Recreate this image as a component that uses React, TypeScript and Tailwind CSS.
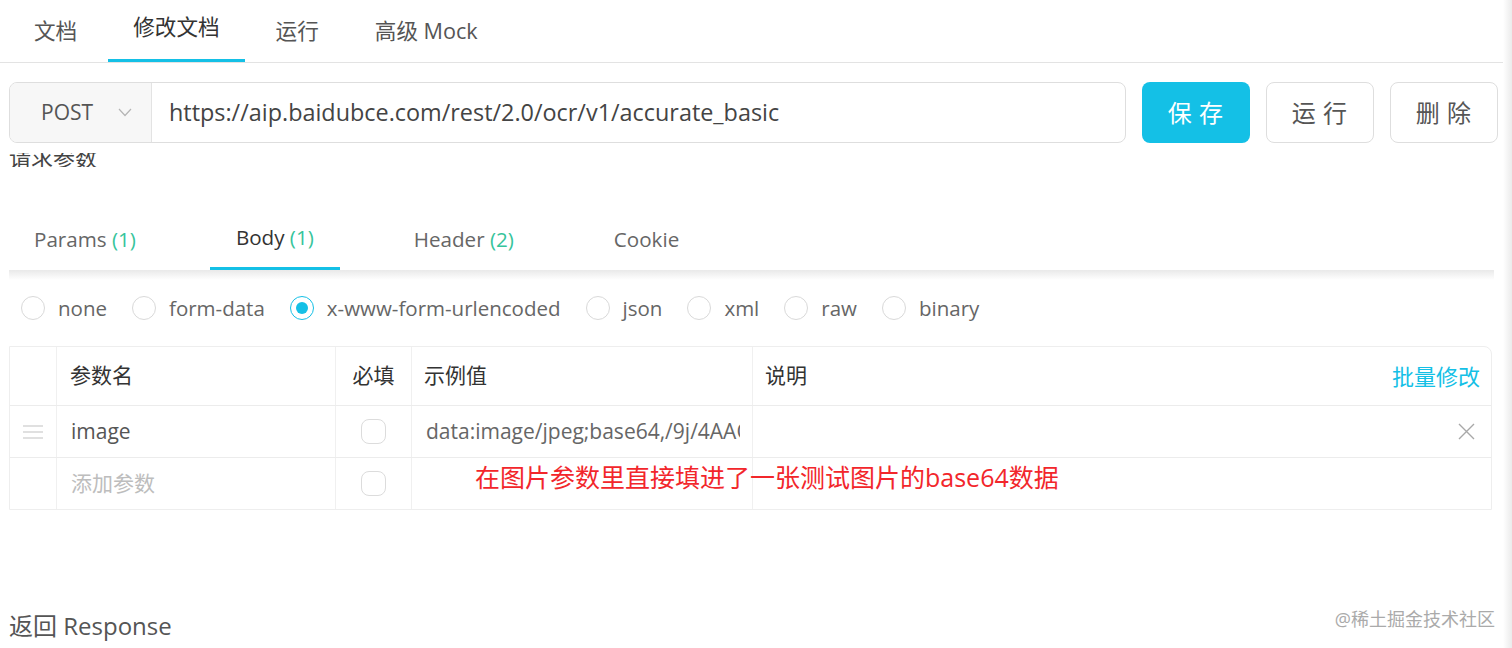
import React from "react";

const FONT = { fontFamily: '"Open Sans", "Noto Sans CJK SC", sans-serif' };

const topTabs = ["文档", "修改文档", "运行", "高级 Mock"];

const reqTabs = [
    { label: "Params", count: "(1)" },
    { label: "Body", count: "(1)" },
    { label: "Header", count: "(2)" },
    { label: "Cookie", count: "" },
];

const bodyTypes = ["none", "form-data", "x-www-form-urlencoded", "json", "xml", "raw", "binary"];

const Radio = ({ checked }: { checked?: boolean }) => (
    <span
        className={`w-[24px] h-[24px] rounded-full border bg-white flex items-center justify-center shrink-0 ${
            checked ? "border-[#14c0e6]" : "border-[#d9d9d9]"
        }`}
    >
        {checked && <span className="w-[12px] h-[12px] rounded-full bg-[#14c0e6]" />}
    </span>
);

const Check = () => <span className="w-[25px] h-[25px] rounded-[8px] border border-[#dcdcdc] bg-white" />;

export default function App() {
    return (
        <div className="flex w-full h-[648px] bg-white overflow-hidden text-[#555]" style={FONT}>
            <div className="w-[1503px] shrink-0">
                {/* 顶部 tab */}
                <div className="flex gap-[6px] pl-[9px] border-b border-[#e3e3e3] h-[63px]">
                    {topTabs.map((t, i) => (
                        <div
                            key={t}
                            className={`h-[62px] px-[25px] flex items-center text-[21.6px] ${
                                i === 1 ? "border-b-[3px] border-[#14c0e6] pt-[3px] text-[#333]" : "text-[#555]"
                            }`}
                        >
                            <span className={i === 1 ? "-mt-[8px]" : "mt-[1px]"}>{t}</span>
                        </div>
                    ))}
                </div>

                {/* URL 行 */}
                <div className="flex gap-[16px] pl-[9px] mt-[19px] h-[61px]">
                    <div className="w-[1117px] flex border border-[#dedede] rounded-[8px] overflow-hidden">
                        <div className="w-[142px] bg-[#f7f7f7] border-r border-[#e3e3e3] flex items-center pl-[31px] gap-[25px]">
                            <span className="text-[21px] text-[#555]">POST</span>
                            <svg width="14" height="9" viewBox="0 0 14 9" fill="none">
                                <path d="M1 1l6 6.5L13 1" stroke="#b5b5b5" strokeWidth="1.2" />
                            </svg>
                        </div>
                        <div className="flex-1 flex items-center pl-[17px] text-[23.4px] text-[#444]">
                            https://aip.baidubce.com/rest/2.0/ocr/v1/accurate_basic
                        </div>
                    </div>
                    <button className="w-[108px] rounded-[8px] bg-[#14c0e6] text-white text-[24px] tracking-[0.3em] pl-[6px]">
                        保存
                    </button>
                    <button className="w-[108px] rounded-[8px] border border-[#dedede] text-[#555] text-[24px] tracking-[0.3em] pl-[6px]">
                        运行
                    </button>
                    <button className="w-[108px] rounded-[8px] border border-[#dedede] text-[#555] text-[24px] tracking-[0.3em] pl-[6px]">
                        删除
                    </button>
                </div>

                {/* 被遮住一半的标题 */}
                <div className="mt-[10px] h-[14px] overflow-hidden flex items-end pl-[9px]">
                    <span className="text-[22px] leading-none text-[#444] translate-y-[1px]">请求参数</span>
                </div>

                {/* 请求 tab */}
                <div className="mt-[41px] mx-[8px] flex gap-[48px] h-[62px]">
                    {reqTabs.map((t, i) => (
                        <div
                            key={t.label}
                            className={`px-[26px] flex items-center text-[20.6px] ${
                                i === 1 ? "border-b-[3px] border-[#14c0e6] text-[#333]" : "text-[#666]"
                            }`}
                        >
                            <span className={i === 1 ? "-mt-[1px]" : ""}>
                                {t.label}
                                {t.count && <span className="text-[#36c49b]"> {t.count}</span>}
                            </span>
                        </div>
                    ))}
                </div>
                <div className="mx-[9px] h-[10px] bg-gradient-to-b from-[#e9e9e9] to-white" />

                {/* body 类型 */}
                <div className="flex items-center h-[56px] pl-[21px] gap-[25px] text-[20.5px] text-[#666]">
                    {bodyTypes.map((b, i) => (
                        <label key={b} className="flex items-center gap-[13px]">
                            <Radio checked={i === 2} />
                            <span>{b}</span>
                        </label>
                    ))}
                </div>

                {/* 参数表 */}
                <div className="mt-[10px] ml-[9px] w-[1483px] border border-[#eeeeee] rounded-tr-[8px] text-[21px]">
                    <div className="flex h-[59px] border-b border-[#ececec] text-[#333]">
                        <div className="w-[47px] border-r border-[#f0f0f0]" />
                        <div className="w-[279px] border-r border-[#f0f0f0] flex items-center pl-[13px]">参数名</div>
                        <div className="w-[76px] border-r border-[#f0f0f0] flex items-center justify-center">必填</div>
                        <div className="w-[341px] border-r border-[#f0f0f0] flex items-center pl-[12px]">示例值</div>
                        <div className="flex-1 flex items-center justify-between pl-[12px] pr-[11px]">
                            <span>说明</span>
                            <span className="text-[22px] text-[#14c0e6]">批量修改</span>
                        </div>
                    </div>
                    <div className="flex h-[52px] border-b border-[#ececec]">
                        <div className="w-[47px] border-r border-[#f0f0f0] flex items-center justify-center">
                            <svg width="20" height="16" viewBox="0 0 20 16">
                                <path d="M0 2h20M0 8h20M0 14h20" stroke="#d6d6d6" strokeWidth="1.5" />
                            </svg>
                        </div>
                        <div className="w-[279px] border-r border-[#f0f0f0] flex items-center pl-[14px] text-[#555]">image</div>
                        <div className="w-[76px] border-r border-[#f0f0f0] flex items-center justify-center">
                            <Check />
                        </div>
                        <div className="w-[341px] border-r border-[#f0f0f0] flex items-center pl-[14px] pr-[12px] overflow-hidden whitespace-nowrap text-[#666]">
                            <span className="overflow-hidden">data:image/jpeg;base64,/9j/4AAQSkZJRgABAQAAAQABAAD</span>
                        </div>
                        <div className="flex-1 flex items-center justify-end pr-[16px]">
                            <svg width="17" height="17" viewBox="0 0 17 17">
                                <path d="M1 1l15 15M16 1L1 16" stroke="#a8a8a8" strokeWidth="1.4" />
                            </svg>
                        </div>
                    </div>
                    <div className="flex h-[51px]">
                        <div className="w-[47px] border-r border-[#f0f0f0]" />
                        <div className="w-[279px] border-r border-[#f0f0f0] flex items-center pl-[14px] text-[#bdbdbd]">添加参数</div>
                        <div className="w-[76px] border-r border-[#f0f0f0] flex items-center justify-center">
                            <Check />
                        </div>
                        <div className="w-[341px] border-r border-[#f0f0f0] flex items-center pl-[63px] pb-[12px] whitespace-nowrap overflow-visible text-[25px] text-[#f2262b] relative z-10">
                            在图片参数里直接填进了一张测试图片的base64数据
                        </div>
                        <div className="flex-1" />
                    </div>
                </div>

                {/* 返回 */}
                <div className="mt-[98px] flex justify-between items-start pl-[9px] pr-[8px]">
                    <span className="text-[24px] leading-[36px] text-[#555]">返回 Response</span>
                    <span className="text-[18px] leading-[20px] text-[#aaaaaa] mt-[1px]">@稀土掘金技术社区</span>
                </div>
            </div>
            <div className="flex-1 bg-gradient-to-r from-white to-[#ebebeb]" />
        </div>
    );
}
